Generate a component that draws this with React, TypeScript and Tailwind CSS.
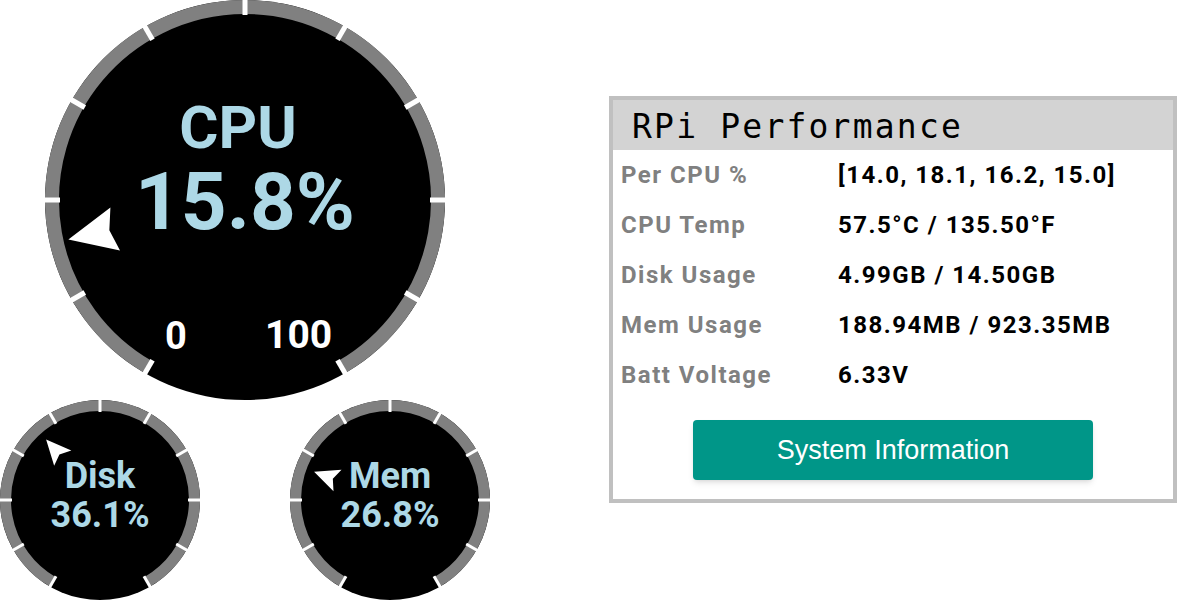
import React from "react";

type GaugeProps = {
  size: number;
  ring: number;
  tick: number;
  pct: number;
  needle: { tip: number; len: number; notch: number; half: number };
};

const TICKS = [240, 210, 180, 150, 120, 90, 60, 30, 0, -30, -60];

const pt = (c: number, r: number, deg: number) => {
  const a = (deg * Math.PI) / 180;
  return [c + r * Math.cos(a), c - r * Math.sin(a)];
};

const Dial: React.FC<GaugeProps> = ({ size, ring, tick, pct, needle }) => {
  const c = size / 2;
  const r = c - ring / 2;
  const [sx, sy] = pt(c, r, 240);
  const [ex, ey] = pt(c, r, -60);
  const angle = 240 - pct * 3;
  const { tip, len, notch, half } = needle;

  return (
    <svg
      className="absolute inset-0"
      width={size}
      height={size}
      viewBox={`0 0 ${size} ${size}`}
    >
      <path
        d={`M ${sx} ${sy} A ${r} ${r} 0 1 1 ${ex} ${ey}`}
        fill="none"
        stroke="#808080"
        strokeWidth={ring}
      />
      {TICKS.map((t) => {
        const [x1, y1] = pt(c, c - ring - 1, t);
        const [x2, y2] = pt(c, c + 1, t);
        return <line key={t} x1={x1} y1={y1} x2={x2} y2={y2} stroke="#fff" strokeWidth={tick} />;
      })}
      <polygon
        transform={`translate(${c} ${c}) rotate(${-angle})`}
        points={`${tip},0 ${tip - len},${-half} ${tip - notch},0 ${tip - len},${half}`}
        fill="#fff"
      />
    </svg>
  );
};

const SmallGauge: React.FC<{ name: string; pct: number }> = ({ name, pct }) => (
  <div className="relative w-[200px] h-[200px] rounded-full bg-black shrink-0">
    <Dial size={200} ring={11} tick={3} pct={pct} needle={{ tip: 81, len: 25, notch: 20, half: 11.5 }} />
    <div className="relative flex flex-col items-center pt-[58px] font-['Roboto',sans-serif] font-bold text-[#add8e6]">
      <span className="text-[36px] leading-none">{name}</span>
      <span className="mt-[3px] text-[36px] leading-none">{pct.toFixed(1)}%</span>
    </div>
  </div>
);

const rows = [
  ["Per CPU %", "[14.0, 18.1, 16.2, 15.0]"],
  ["CPU Temp", "57.5°C / 135.50°F"],
  ["Disk Usage", "4.99GB / 14.50GB"],
  ["Mem Usage", "188.94MB / 923.35MB"],
  ["Batt Voltage", "6.33V"],
];

export default function App() {
  return (
    <div className="flex w-[1178px] h-[600px] bg-white overflow-hidden">
      <div className="flex flex-col w-[490px] shrink-0">
        <div className="ml-[45px] relative w-[400px] h-[400px] rounded-full bg-black">
          <Dial size={400} ring={14} tick={5} pct={15.8} needle={{ tip: 181, len: 48, notch: 42, half: 22 }} />
          <div className="relative flex flex-col items-center pt-[98px] font-['Roboto',sans-serif] font-bold text-[#add8e6]">
            <span className="mr-[14px] text-[60px] leading-none">CPU</span>
            <span className="mt-[4px] text-[80px] leading-none">15.8%</span>
          </div>
          <span className="absolute left-[120px] top-[317px] text-[38px] leading-none font-bold text-white font-['Roboto',sans-serif]">
            0
          </span>
          <span className="absolute left-[220px] top-[316px] text-[39px] leading-none font-bold text-white font-['Roboto',sans-serif]">
            100
          </span>
        </div>
        <div className="flex gap-[90px]">
          <SmallGauge name="Disk" pct={36.1} />
          <SmallGauge name="Mem" pct={26.8} />
        </div>
      </div>

      <div className="ml-[119px] mt-[96px] w-[568px] h-[407px] shrink-0 border-4 border-[#c0c0c0] flex flex-col">
        <div className="h-[50px] bg-[#d3d3d3] flex items-center pl-[19px] pt-[2px]">
          <h1 className="font-['DejaVu_Sans_Mono',monospace] text-[33px] tracking-[2.2px] leading-none text-black">
            RPi Performance
          </h1>
        </div>
        <div className="flex flex-col font-['Roboto',sans-serif] font-bold text-[24px] tracking-[1.5px]">
          {rows.map(([label, value]) => (
            <div key={label} className="h-[50px] flex items-center pl-[8px]">
              <span className="w-[217px] leading-none text-[#808080]">{label}</span>
              <span className="leading-none text-black">{value}</span>
            </div>
          ))}
        </div>
        <div className="flex justify-center mt-[20px]">
          <button className="w-[400px] h-[60px] rounded-[4px] bg-[#009688] text-white text-[27px] font-['Liberation_Sans',sans-serif] shadow-md">
            System Information
          </button>
        </div>
      </div>
    </div>
  );
}
